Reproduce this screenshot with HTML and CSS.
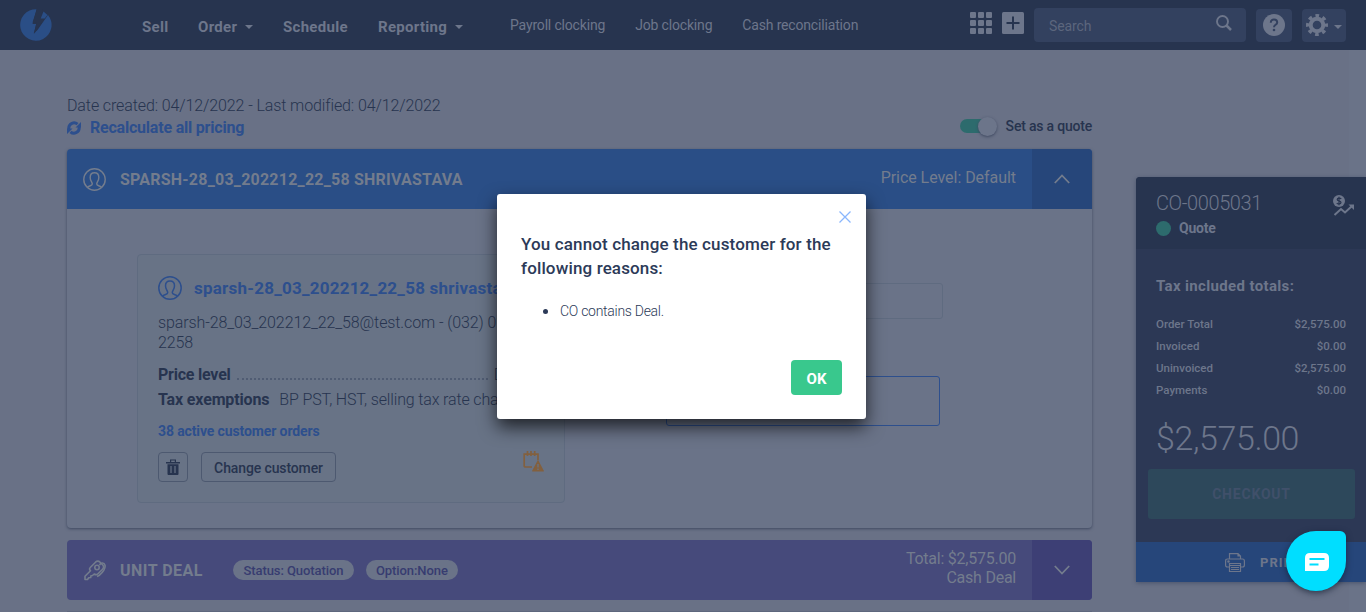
FILE: index.html
```html
<!DOCTYPE html>
<html lang="en">
<head>
<meta charset="utf-8">
<title>Customer order CO-0005031</title>
<link rel="stylesheet" href="styles.css">
</head>
<body>
<svg class="defs" width="0" height="0">
  <symbol id="person" viewBox="0 0 24 24"><g fill="none" stroke="currentColor" stroke-width="1.500"><circle cx="12" cy="12" r="11.200"/><path d="M4.500 20.200c1.200-1.600 5.200-1.400 5.200-3.400 0-2.300-2.200-3.200-2.200-7C7.500 6.500 9.300 5 12 5s4.500 1.500 4.500 4.800c0 3.800-2.200 4.700-2.200 7 0 2 4 1.800 5.200 3.400"/></g></symbol>
</svg>
<header class="topbar">
  <svg class="logo" viewBox="0 0 32 32"><path fill="#2a4e86" d="M16.500.3A15.700 15.700 0 1 0 28 6L17.500 21l-3.800 3.500 2.500-9.500h-3.700z"/><path fill="#27344f" d="M17 0h6l-2 9h4L14 25l2.500-11.500h-4z"/><path fill="#2a4e86" d="M23.500 2.500l4 3.500-2.800 3.500h-4z"/></svg>
  <nav class="nav">
    <a class="n-sell">Sell</a>
    <a class="n-order">Order<i class="caret"></i></a>
    <a class="n-sched">Schedule</a>
    <a class="n-rep">Reporting<i class="caret"></i></a>
  </nav>
  <nav class="subnav"><a>Payroll clocking</a><a>Job clocking</a><a>Cash reconciliation</a></nav>
  <div class="tools">
    <svg class="grid" viewBox="0 0 22 22" fill="#6d768b"><rect width="6" height="6" rx="1"/><rect x="8" width="6" height="6" rx="1"/><rect x="16" width="6" height="6" rx="1"/><rect y="8" width="6" height="6" rx="1"/><rect x="8" y="8" width="6" height="6" rx="1"/><rect x="16" y="8" width="6" height="6" rx="1"/><rect y="16" width="6" height="6" rx="1"/><rect x="8" y="16" width="6" height="6" rx="1"/><rect x="16" y="16" width="6" height="6" rx="1"/></svg>
    <svg class="plus" viewBox="0 0 22 22"><rect width="22" height="22" rx="1.500" fill="#6d768b"/><path d="M4.500 11h13M11 4.500v13" stroke="#27344f" stroke-width="2"/></svg>
    <div class="search"><span>Search</span><svg viewBox="0 0 16 16" fill="none" stroke="#6d768b"><circle cx="6.500" cy="6.500" r="5.500" stroke-width="1.900"/><path d="M10.500 10.500L15 15" stroke-width="2.500"/></svg></div>
    <div class="tool help"><svg viewBox="0 0 22 22"><circle cx="11" cy="11" r="11" fill="#6d768b"/><path d="M7.800 8.700C7.800 6.600 9.200 5.600 11 5.600s3.200 1 3.200 2.800c0 2.400-3.200 2.400-3.200 4.800" fill="none" stroke="#33415f" stroke-width="2"/><circle cx="11" cy="16" r="1.300" fill="#33415f"/></svg></div>
    <div class="tool gear"><svg viewBox="0 0 22 22" fill="none" stroke="#6d768b"><circle cx="11" cy="11" r="6.300" stroke-width="4"/><circle cx="11" cy="11" r="9.300" stroke-width="3.400" stroke-dasharray="3.650 3.650" stroke-dashoffset="1.820"/></svg><i class="caret"></i></div>
  </div>
</header>

<div class="page">
  <main class="content">
    <div class="intro">
      <div>
        <div class="dates">Date created: 04/12/2022 - Last modified: 04/12/2022</div>
        <a class="recalc"><svg viewBox="0 0 14 14" fill="none" stroke="#2d4f8d" stroke-width="3"><path d="M1.800 8.500V7A5.200 5.200 0 0 1 10.500 3.200M12.200 5.500V7a5.200 5.200 0 0 1-8.700 3.800"/><path d="M14 1v5.500H8.500zM0 13V7.500h5.500z" fill="#2d4f8d" stroke="none"/></svg><span>Recalculate all pricing</span></a>
      </div>
      <div class="quote-toggle"><span class="switch"><i></i></span><span class="qt">Set as a quote</span></div>
    </div>

    <section class="card">
      <div class="bar blue">
        <svg class="p-icon"><use href="#person"/></svg>
        <span class="bar-title cust">SPARSH-28_03_202212_22_58 SHRIVASTAVA</span>
        <span class="bar-info level">Price Level: Default</span>
        <span class="bar-toggle"><svg viewBox="0 0 16 10"><path d="M.8 9L8 1.500 15.200 9"/></svg></span>
      </div>
      <div class="card-body">
        <div class="customer">
          <div class="name-row"><svg><use href="#person"/></svg><b>sparsh-28_03_202212_22_58 shrivastava</b></div>
          <div class="contact">sparsh-28_03_202212_22_58@test.com - (032) 022-<br>2258</div>
          <div class="price-row"><b>Price level</b><i class="dots"></i><span>Default</span></div>
          <div class="tax-row"><b>Tax exemptions</b><span>BP PST, HST, selling tax rate change</span></div>
          <a class="orders">38 active customer orders</a>
          <div class="actions">
            <span class="btn trash"><svg viewBox="0 0 14 16" fill="#27344f"><path d="M0 3h14v1.500H0zM4 3V.5h6V3H8.800V1.600H5.200V3zM1.500 5.300h11V15q0 1-1 1h-9q-1 0-1-1z"/><path d="M5 7v7M9 7v7" stroke="#687386" stroke-width="1.200"/></svg></span>
            <span class="btn change">Change customer</span>
            <svg class="warn" viewBox="0 0 21 21" fill="none" stroke="#82603f" stroke-width="1.700"><path d="M9 16H2.500Q1.200 16 1.200 14.700V3.200H15v6M4.500 0v5M8 0v5M11.700 0v5"/><path d="M15 10L20.300 20h-10.600z" fill="#82603f" stroke-linejoin="round" stroke-width="1.200"/><path d="M15 13v3.500M15 17.500v1.500" stroke="#687386" stroke-width="1.300"/></svg>
          </div>
        </div>
        <div class="fields"><div class="field one"></div><div class="field two"></div></div>
      </div>
    </section>

    <section class="bar purple">
      <svg class="keys" viewBox="0 0 22 21" fill="none" stroke="#737c8d" stroke-width="1.600" stroke-linejoin="round"><path d="M1 19.500v-3.200l5.500-5.500c-1.300-1.300-1.300-2.300 0-3.600l5-5C13 .8 14.500.8 16 2.200l2.500 2.500c1.500 1.500 1.500 3 0 4.500l-4.500 4.500c-1.300 1.300-2.500 1.300-3.800.3l-1.700 1.500-1.500.2-.3 1.800-2 .3L3.500 19.500z"/><circle cx="13" cy="7.500" r="2.200"/><path d="M15.500 5c1.500-2.800 4.800-2.500 5.500.2.600 3-1.500 6.500-5.500 10L13 16.500"/></svg>
      <span class="bar-title unit">UNIT DEAL</span>
      <span class="pill status">Status: Quotation</span><span class="pill option">Option:None</span>
      <span class="bar-info total">Total: $2,575.00<br>Cash Deal</span>
      <span class="bar-toggle"><svg viewBox="0 0 16 10"><path d="M.8 1L8 8.500 15.200 1"/></svg></span>
    </section>
    <section class="next"></section>
  </main>

  <aside class="summary">
    <div class="sum-head">
      <div><div class="order-no">CO-0005031</div><div class="state"><i></i><b>Quote</b></div></div>
      <svg viewBox="0 0 21 21"><circle cx="6" cy="6" r="6" fill="#6d768b"/><path d="M8.200 4C7.500 2.800 4.300 2.700 4.200 4.500 4.200 6.200 8 5.600 8 7.500 7.900 9.300 4.500 9.200 3.800 8M6 1.800v8.400" fill="none" stroke="#27344f" stroke-width="1.200"/><path d="M1.500 20L8 14l4 3.500 7-6.500" fill="none" stroke="#6d768b" stroke-width="2"/><path d="M15.500 9.500H21V15z" fill="#6d768b"/></svg>
    </div>
    <div class="sum-body">
      <h3>Tax included totals:</h3>
      <dl><dt>Order Total</dt><dd>$2,575.00</dd><dt>Invoiced</dt><dd>$0.00</dd><dt>Uninvoiced</dt><dd>$2,575.00</dd><dt>Payments</dt><dd>$0.00</dd></dl>
      <div class="big">$2,575.00</div>
      <div class="checkout">CHECKOUT</div>
    </div>
    <div class="print"><svg viewBox="0 0 20 19" fill="none" stroke="#6d768b" stroke-width="1.200"><path d="M4.500 6V.7h8.500L15.500 3v3M13 .7V3h2.500M4 14H2.500Q.6 14 .6 12V8Q.6 6 2.500 6h15q1.900 0 1.900 2v4q0 2-1.900 2H16M4.500 10.500h11v8h-11zM4.500 12.500h11M6 14.500h8M6 16.500h8"/><circle cx="3.500" cy="8.500" r=".7"/></svg><span>PRINT</span></div>
  </aside>
</div>

<div class="modal" role="dialog">
  <svg class="close" viewBox="0 0 12 12"><path d="M.5.500l11 11M11.500.500l-11 11" stroke="#8ab6fc" stroke-width="1.300"/></svg>
  <h2>You cannot change the customer for the<br>following reasons:</h2>
  <ul><li>CO contains Deal.</li></ul>
  <button class="ok">OK</button>
</div>
<div class="chat"><svg viewBox="0 0 24 18"><path fill="#fff" d="M5 0h14q5 0 5 5v8q0 5-5 5H0V5q0-5 5-5z"/><path d="M4.500 6h15M4.500 11.500h9" stroke="#00deff" stroke-width="2"/></svg></div>
</body>
</html>
```
FILE: styles.css
```css
* { box-sizing: border-box; }
body {
  margin: 0; width: 1366px; height: 612px; overflow: hidden; position: relative;
  font-family: Roboto, "Liberation Sans", sans-serif; font-size: 16px; color: #27344f;
  background: linear-gradient(90deg, #697186 1349px, #6a7388 1349px);
}
svg { display: block; flex: none; }
.defs { position: absolute; }
.caret { display: block; border: 4px solid transparent; border-top-color: #6d768b; border-bottom: 0; }

.topbar { height: 50px; background: #27344f; display: flex; align-items: center; padding-left: 20px; color: #6d768b; white-space: nowrap; }
.logo { width: 32px; height: 32px; }
.nav { display: flex; margin-left: 90px; padding-top: 4px; font-weight: 700; font-size: 15px; width: 368px; letter-spacing: .3px; }
.nav a { display: flex; flex: none; align-items: center; gap: 8px; }
.n-sell { width: 56px; }
.n-order { width: 85px; }
.n-sched { width: 95px; }
.subnav { display: flex; gap: 30px; font-size: 14px; letter-spacing: -.17px; padding-bottom: 1px; }
.tools { margin-left: auto; margin-right: 20px; display: flex; align-items: center; height: 50px; }
.grid, .plus { width: 22px; height: 22px; margin: 0 10px 4px 0; }
.search { width: 212px; height: 34px; border-radius: 4px; background: #33415f; display: flex; align-items: center; justify-content: space-between; padding: 0 14px 0 15px; font-size: 14px; color: #5c667d; }
.search svg { width: 16px; height: 16px; margin-bottom: 5px; }
.search span { padding-top: 2px; letter-spacing: -.1px; }
.tool { height: 33px; border-radius: 4px; background: #33415f; display: flex; align-items: center; justify-content: center; margin-left: 10px; }
.tool svg { width: 22px; height: 22px; }
.help { width: 36px; }
.gear { width: 44px; gap: 6px; }
.gear .caret { margin-top: 4px; }

.page { display: flex; align-items: flex-start; padding-left: 67px; gap: 44px; }
.content { width: 1025px; flex: none; }
.intro { height: 99px; display: flex; justify-content: space-between; padding-top: 45px; white-space: nowrap; }
.dates { line-height: 22px; font-weight: 300; letter-spacing: -.11px; }
.recalc { display: flex; align-items: center; gap: 9px; font-weight: 700; line-height: 22px; color: #2d4f8d; letter-spacing: -.21px; }
.recalc svg { width: 14px; height: 14px; }
.quote-toggle { display: flex; align-items: center; height: 20px; margin-top: 21px; font-weight: 500; font-size: 14px; letter-spacing: -.2px; }
.switch { width: 37px; height: 14px; border-radius: 7px; background: linear-gradient(90deg, #2d6b6d 26px, transparent 26px); display: flex; justify-content: flex-end; align-items: center; margin-right: 9px; }
.switch i { width: 19px; height: 19px; border-radius: 50%; background: #6c758a; box-shadow: 0 1px 3px #3e4860; flex: none; }

.card { border-radius: 4px; background: #6a7388; box-shadow: 0 1px 3px #3e4860; height: 379px; }
.bar { display: flex; align-items: center; height: 60px; color: #737c8d; overflow: hidden; padding-left: 16px; white-space: nowrap; }
.blue { background: #2a4e86; border-radius: 4px 4px 0 0; }
.purple { background: #464a7b; border-radius: 4px; margin-top: 12px; padding-left: 17px; }
.p-icon { width: 23px; height: 23px; margin-right: 14px; }
.bar-title { font-weight: 700; font-size: 16px; }
.cust { letter-spacing: .22px; }
.unit { letter-spacing: .48px; }
.bar-info { margin-left: auto; margin-right: 16px; text-align: right; line-height: 19px; }
.level { padding-bottom: 3px; letter-spacing: -.05px; }
.total { padding-bottom: 4px; letter-spacing: -.24px; }
.bar-toggle { width: 60px; height: 60px; background: #26467a; display: flex; align-items: center; justify-content: center; }
.bar-toggle svg { width: 16px; height: 10px; fill: none; stroke: #737c8d; stroke-width: 1.8; }
.purple .bar-toggle { background: #3d3f75; }
.keys { width: 22px; height: 21px; margin-right: 14px; }
.pill { height: 20px; line-height: 21px; border-radius: 10px; background: #6a7388; color: #373c70; font-size: 13px; font-weight: 500; text-align: center; letter-spacing: -.08px; }
.status { width: 121px; margin-left: 30px; }
.option { width: 92px; margin-left: 12px; }
.next { height: 10px; margin-top: 11px; background: #5e677d; }

.card-body { display: flex; padding: 45px 0 0 70px; height: 319px; }
.customer { width: 428px; height: 249px; border: 1px solid #5f6b80; border-radius: 4px; background: #687386; padding: 20px 20px 0; white-space: nowrap; overflow: hidden; }
.customer b { font-weight: 700; }
.name-row { display: flex; align-items: center; gap: 12px; height: 26px; color: #2d4f8d; font-size: 17px; }
.name-row svg { width: 24px; height: 24px; margin-bottom: 1px; }
.name-row b { letter-spacing: .23px; }
.contact { margin-top: 12px; line-height: 20px; font-weight: 300; letter-spacing: -.11px; }
.price-row { display: flex; align-items: center; margin-top: 11px; height: 20px; font-weight: 300; }
.price-row b { letter-spacing: -.22px; }
.dots { width: 254px; margin: 9px 6px 0 6px; border-top: 2px dotted #505c73; }
.tax-row { display: flex; gap: 10px; margin-top: 5px; line-height: 22px; font-weight: 300; letter-spacing: -.15px; }
.orders { display: block; margin-top: 10px; line-height: 20px; color: #2d4f8d; font-size: 14px; font-weight: 700; letter-spacing: -.12px; }
.actions { display: flex; align-items: center; margin-top: 11px; height: 30px; }
.btn { height: 30px; border: 1px solid #4d5970; border-radius: 4px; display: flex; align-items: center; justify-content: center; font-size: 14px; font-weight: 500; letter-spacing: -.12px; }
.trash { width: 30px; margin-right: 13px; }
.trash svg { width: 14px; height: 16px; }
.change { width: 135px; padding-top: 1px; }
.warn { width: 21px; height: 21px; margin: 0 0 11px auto; }
.fields { margin-left: 101px; padding-top: 29px; }
.field { border: 1px solid #5f6b80; border-radius: 3px; }
.one { width: 277px; height: 36px; }
.two { width: 274px; height: 50px; margin-top: 57px; border-color: #2d4f8d; }

.summary { width: 230px; margin-top: 127px; height: 405px; border-radius: 4px 0 0 0; overflow: hidden; background: #2c3855; color: #6d768b; box-shadow: 0 1px 4px #4a546b; flex: none; white-space: nowrap; }
.sum-head { height: 72px; background: #27344f; display: flex; justify-content: space-between; padding: 14px 12px 0 20px; }
.sum-head svg { width: 21px; height: 21px; margin-top: 4px; }
.order-no { font-size: 20px; font-weight: 300; line-height: 24px; letter-spacing: -.4px; }
.state { display: flex; align-items: center; gap: 8px; font-size: 14px; line-height: 24px; margin-top: 1px; letter-spacing: -.2px; }
.state i { width: 15px; height: 15px; border-radius: 50%; background: #2d6b6d; }
.sum-body { height: 293px; padding: 28px 11px 0 12px; }
.sum-body h3 { margin: 0 8px; font-size: 15px; line-height: 18px; letter-spacing: .35px; }
.sum-body dl { display: grid; grid-template-columns: 1fr auto; margin: 18px 9px 0 8px; font-size: 11.5px; line-height: 22px; font-weight: 500; }
.sum-body dd { margin: 0; text-align: right; }
.big { margin: 17px 8px 0; font-size: 34px; line-height: 40px; font-weight: 300; letter-spacing: -.4px; }
.checkout { height: 50px; margin-top: 11px; border-radius: 3px; background: #2d485b; color: #40506a; display: flex; align-items: center; justify-content: center; font-size: 14px; font-weight: 700; letter-spacing: .8px; }
.print { height: 40px; background: #26467a; display: flex; align-items: center; padding-left: 89px; gap: 15px; font-size: 13px; font-weight: 700; letter-spacing: 1px; }
.print svg { width: 20px; height: 19px; }

.modal { position: absolute; left: 497px; top: 194px; width: 369px; height: 225px; border-radius: 3px; background: #fff; box-shadow: 0 8px 18px 0 rgba(0, 0, 0, .7); padding: 38px 24px 0; white-space: nowrap; color: #2c3a58; }
.close { position: absolute; right: 15px; top: 17px; width: 12px; height: 12px; }
.modal h2 { margin: 0; font-size: 17px; line-height: 24px; font-weight: 500; letter-spacing: .14px; }
.modal ul { margin: 20px 0 0; padding-left: 39px; height: 20px; font-size: 14px; line-height: 20px; font-weight: 300; letter-spacing: -.28px; }
.modal li::marker { font-size: 17px; }
.ok { display: block; margin: 40px 0 0 270px; width: 51px; height: 35px; border: 0; border-radius: 4px; background: #39c88d; color: #fff; font: 700 15px Roboto, sans-serif; padding: 2px 0 0; }
.chat { position: absolute; left: 1286px; top: 531px; width: 60px; height: 60px; border-radius: 30px 6px 30px 30px; background: #00deff; box-shadow: 0 2px 6px rgba(20, 30, 50, .7); display: flex; align-items: center; justify-content: center; padding: 2px 0 0 2px; }
.chat svg { width: 24px; height: 18px; }
```
